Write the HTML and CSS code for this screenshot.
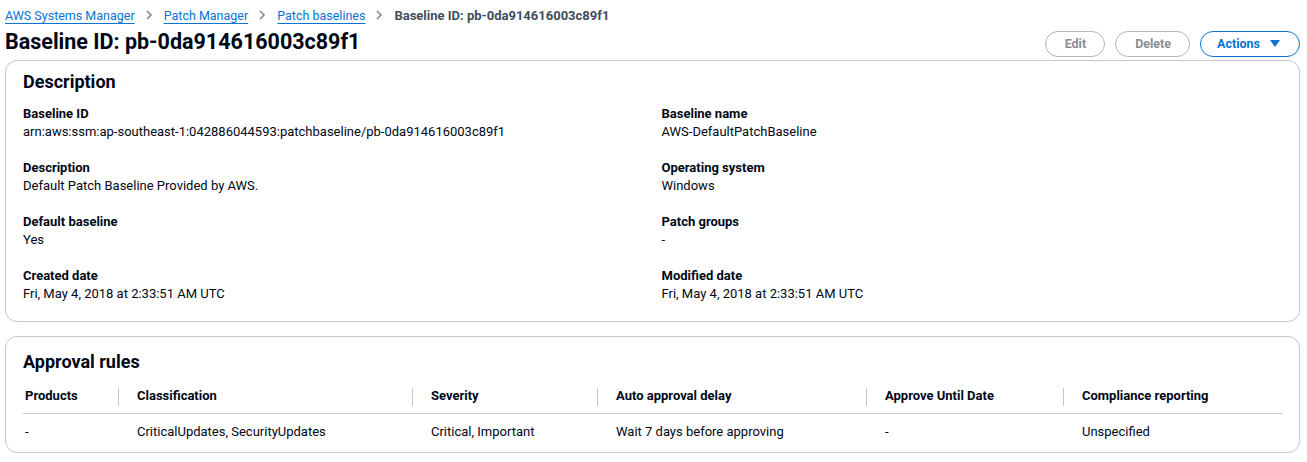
FILE: index.html
```html
<!DOCTYPE html>
<html>
<head>
<meta charset="utf-8">
<link rel="stylesheet" href="styles.css">
</head>
<body>
<div class="page">
  <nav class="crumbs">
    <a href="#">AWS Systems Manager</a>
    <span class="sep"><svg width="8" height="10" viewBox="0 0 8 10"><path d="M2 1l4 4-4 4" fill="none" stroke="#7d8998" stroke-width="1.6"/></svg></span>
    <a href="#">Patch Manager</a>
    <span class="sep"><svg width="8" height="10" viewBox="0 0 8 10"><path d="M2 1l4 4-4 4" fill="none" stroke="#7d8998" stroke-width="1.6"/></svg></span>
    <a href="#">Patch baselines</a>
    <span class="sep"><svg width="8" height="10" viewBox="0 0 8 10"><path d="M2 1l4 4-4 4" fill="none" stroke="#7d8998" stroke-width="1.6"/></svg></span>
    <span class="current">Baseline ID: pb-0da914616003c89f1</span>
  </nav>
  <header class="head">
    <h1>Baseline ID: pb-0da914616003c89f1</h1>
    <div class="actions">
      <button class="btn disabled">Edit</button>
      <button class="btn disabled">Delete</button>
      <button class="btn primary">Actions <svg width="10" height="8" viewBox="0 0 10 8"><path d="M0 0h10L5 7z" fill="#0972d3"/></svg></button>
    </div>
  </header>
  <section class="card">
    <h2>Description</h2>
    <div class="grid">
      <div class="kv"><div class="k">Baseline ID</div><div class="v">arn:aws:ssm:ap-southeast-1:042886044593:patchbaseline/pb-0da914616003c89f1</div></div>
      <div class="kv"><div class="k">Baseline name</div><div class="v">AWS-DefaultPatchBaseline</div></div>
      <div class="kv"><div class="k">Description</div><div class="v">Default Patch Baseline Provided by AWS.</div></div>
      <div class="kv"><div class="k">Operating system</div><div class="v">Windows</div></div>
      <div class="kv"><div class="k">Default baseline</div><div class="v">Yes</div></div>
      <div class="kv"><div class="k">Patch groups</div><div class="v">-</div></div>
      <div class="kv"><div class="k">Created date</div><div class="v">Fri, May 4, 2018 at 2:33:51 AM UTC</div></div>
      <div class="kv"><div class="k">Modified date</div><div class="v">Fri, May 4, 2018 at 2:33:51 AM UTC</div></div>
    </div>
  </section>
  <section class="card card2">
    <h2>Approval rules</h2>
    <table class="rules">
      <colgroup>
        <col class="c1"><col class="c2"><col class="c3"><col class="c4"><col class="c5"><col class="c6">
      </colgroup>
      <thead>
        <tr><th class="first">Products</th><th>Classification</th><th>Severity</th><th>Auto approval delay</th><th>Approve Until Date</th><th class="last">Compliance reporting</th></tr>
      </thead>
      <tbody>
        <tr><td class="first">-</td><td>CriticalUpdates, SecurityUpdates</td><td>Critical, Important</td><td>Wait 7 days before approving</td><td>-</td><td>Unspecified</td></tr>
      </tbody>
    </table>
  </section>
</div>
</body>
</html>
```
FILE: styles.css
```css
* { box-sizing: border-box; }
body {
  margin: 0;
  background: #ffffff;
  color: #000716;
  font-family: Roboto, "Open Sans", sans-serif;
}
.page {
  padding: 5px 7px 0 5px;
}
.crumbs {
  display: flex;
  align-items: center;
  height: 20px;
  font-size: 12.5px;
}
.crumbs a {
  color: #0972d3;
  text-decoration: underline;
  text-underline-offset: 3px;
}
.crumbs .sep {
  display: inline-flex;
  margin: 0 11px 0 10px;
}
.crumbs .current {
  color: #414d5c;
  font-weight: 700;
  font-size: 13px;
}
.head {
  display: flex;
  align-items: center;
  justify-content: space-between;
  height: 35px;
}
h1 {
  margin: 0 0 2px 0;
  font-size: 21.5px;
  font-weight: 700;
}
.actions {
  display: flex;
  gap: 10px;
  padding-top: 2px;
}
.btn {
  height: 26px;
  border-radius: 13px;
  border: 1px solid #b4b4bb;
  background: #fff;
  font-family: inherit;
  font-size: 12.5px;
  font-weight: 700;
  padding: 0 18px 0 19px;
  display: inline-flex;
  align-items: center;
  gap: 10px;
}
.btn.disabled { color: #8c8c94; }
.btn.primary {
  color: #0972d3;
  border: 1.5px solid #0972d3;
  padding: 0 19px 0 16px;
}
.card {
  border: 1px solid #c6c6cd;
  border-radius: 12px;
  padding: 10px 17px 18px 17px;
}
.card2 {
  margin-top: 14px;
  padding-top: 14px;
  padding-bottom: 7px;
}
h2 {
  margin: 0;
  font-size: 18px;
  font-weight: 700;
  line-height: 22px;
}
.grid {
  display: grid;
  grid-template-columns: 1fr 1fr;
  column-gap: 18px;
  row-gap: 18px;
  margin-top: 12px;
}
.kv { font-size: 13px; line-height: 18px; }
.k { font-weight: 700; }
.rules {
  margin-top: 10px;
  width: 100%;
  border-collapse: collapse;
  font-size: 13px;
  table-layout: fixed;
}
.c1 { width: 96px; }
.c2 { width: 294px; }
.c3 { width: 185px; }
.c4 { width: 269px; }
.c5 { width: 197px; }
.rules th {
  text-align: left;
  font-weight: 700;
  padding: 4px 18px 8px 18px;
  border-bottom: 1px solid #c6c6cd;
  position: relative;
  line-height: 18px;
}
.rules th::after {
  content: "";
  position: absolute;
  right: 0;
  top: 5px;
  height: 18px;
  border-right: 1px solid #c6c6cd;
}
.rules th.last::after { display: none; }
.rules td {
  padding: 9px 18px 4px 18px;
  line-height: 18px;
}
.rules .first { padding-left: 2px; }
```
